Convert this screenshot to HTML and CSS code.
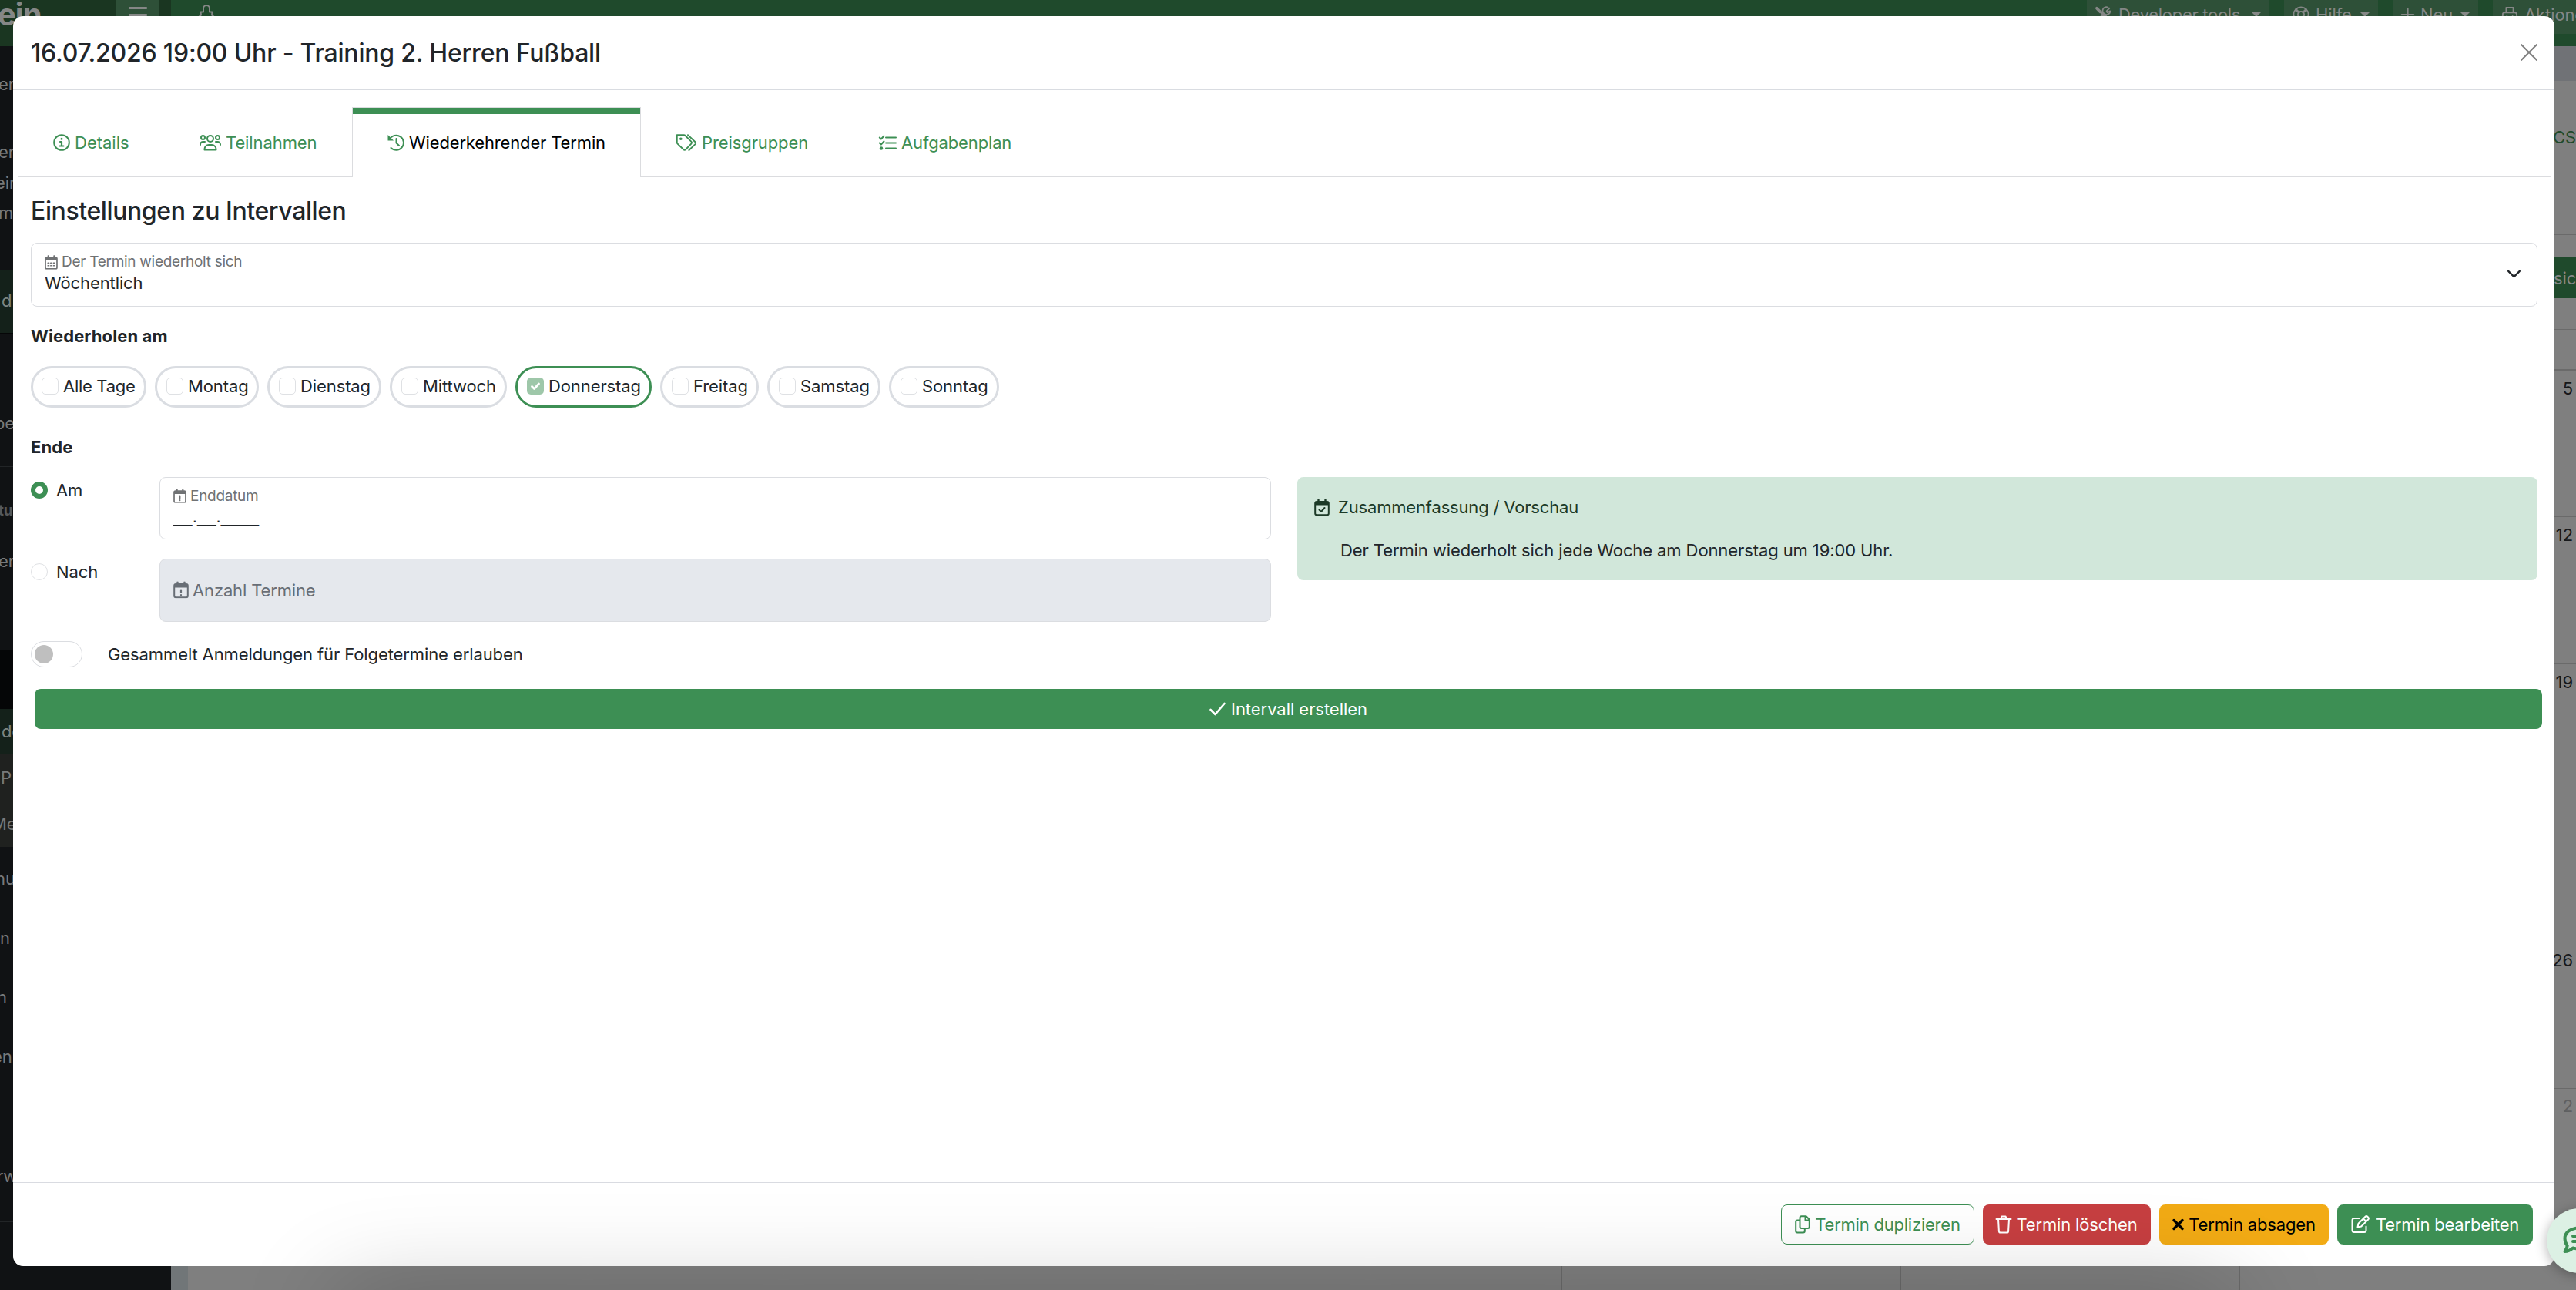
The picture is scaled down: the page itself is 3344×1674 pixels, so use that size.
FILE: index.html
```
<!DOCTYPE html>
<html lang="de">
<head>
    <meta charset="utf-8">
    <title>Termin</title>
    <link rel="stylesheet" href="styles.css">
</head>
<body>
    <svg class="sprite" aria-hidden="true">
        <symbol id="calendar" viewBox="0 0 20 22">
            <path d="M5.5 1v4M14.5 1v4" stroke-width="2.4"/>
            <rect x="1.2" y="3.4" width="17.6" height="17.4" rx="2"/>
            <path d="M1.2 4h17.6v4H1.2z" fill="currentColor" stroke="none"/>
        </symbol>
    </svg>

    <div class="page">
        <div class="topbar">
            <div class="brand">ein</div>
            <div class="burger"><span></span><span></span><span></span></div>
            <div class="topbar-main">
                <svg class="bell" viewBox="0 0 26 34"><path d="M9 9.500V5a4 4 0 0 1 8 0v4.500h3.500l-.5 4 4 3.500-11 12L2 17l4-3.500-.5-4z"/></svg>
                <div class="topbar-menu">
                    <div class="menu-button tools">
                        <svg viewBox="0 0 24 24"><path d="M2 3l5 5M9 9l12 12M3 21l9-9" stroke-width="4"/><path d="M20 3l-4 4 1 2 4-2a5 5 0 0 1-8 4 5 5 0 0 1 5-9"/></svg>
                        <span>Developer tools</span><i class="caret"></i>
                    </div>
                    <div class="menu-button help">
                        <svg viewBox="0 0 24 24"><circle cx="12" cy="12" r="10.500"/><circle cx="12" cy="12" r="4.500"/><path d="M5 5l4 4M19 5l-4 4M5 19l4-4M19 19l-4-4" stroke-width="3"/></svg>
                        <span>Hilfe</span><i class="caret"></i>
                    </div>
                    <div class="menu-button new">
                        <svg viewBox="0 0 20 24"><path d="M10 3v18M1 12h18" stroke-width="2.6"/></svg>
                        <span>Neu</span><i class="caret"></i>
                    </div>
                    <div class="menu-button actions">
                        <svg viewBox="0 0 24 24"><path d="M7 9V2h10v7M2 21V12a3 3 0 0 1 3-3h14a3 3 0 0 1 3 3v9M8 14v3M16 14v3"/></svg>
                        <span>Aktionen</span>
                    </div>
                </div>
            </div>
        </div>

        <div class="page-body">
            <div class="sidebar">
                <span class="nav-item h88">er</span>
                <span class="nav-item h40">er</span>
                <span class="nav-item h40 low">ein</span>
                <span class="nav-item h123">m</span>
                <span class="nav-item active h81">d</span>
                <span class="nav-item line-top h173">be</span>
                <span class="nav-item line-top small">tur</span>
                <span class="nav-item ern">er</span>
                <span class="nav-gap"></span>
                <span class="nav-item active h59">de</span>
                <span class="nav-item sub p">P</span>
                <span class="nav-item sub me">Me</span>
                <span class="nav-item nu">nu</span>
                <span class="nav-item h77">n</span>
                <span class="nav-item h77 left">n</span>
                <span class="nav-item h77 en">en</span>
                <span class="nav-item rw">rw</span>
                <span class="nav-item line-top"></span>
            </div>
            <div class="calendar">
                <div class="crumbs"></div>
                <div class="calendar-head">
                    <span class="ics">CS</span>
                    <span class="view-button">sich</span>
                </div>
                <div class="week-head"></div>
                <div class="week w1"><span>5</span></div>
                <div class="week w2"><span>12</span></div>
                <div class="week w3"><span>19</span></div>
                <div class="week w4"><span>26</span></div>
                <div class="week w5"><span>2</span></div>
            </div>
        </div>
    </div>

    <div class="modal">
        <div class="modal-header">
            <h1>16.07.2026 19:00 Uhr - Training 2. Herren Fußball</h1>
            <svg class="close" viewBox="0 0 24 24"><path d="M2 2l20 20M22 2L2 22"/></svg>
        </div>

        <div class="tabs">
            <div class="tab">
                <svg class="i22" viewBox="0 0 22 22"><circle cx="11" cy="11" r="9.800"/><path d="M9 10h2v5.500M8.500 15.500h5" stroke-width="2.200"/><circle cx="11" cy="6.300" r="1.500" fill="currentColor" stroke="none"/></svg>
                <span>Details</span>
            </div>
            <div class="tab">
                <svg class="i28" viewBox="0 0 28 22"><circle cx="14" cy="6" r="4"/><path d="M6.500 20.500v-1a5.500 5.500 0 0 1 5.500-5.500h4a5.500 5.500 0 0 1 5.500 5.500v1z"/><circle cx="4.500" cy="4.500" r="2.500"/><circle cx="23.500" cy="4.500" r="2.500"/><path d="M1 14v-.5a3.500 3.500 0 0 1 3.500-3.500H7M27 14v-.5a3.500 3.500 0 0 0-3.500-3.500H21"/></svg>
                <span>Teilnahmen</span>
            </div>
            <div class="tab tab-active">
                <svg class="i22" viewBox="0 0 22 22"><path d="M3 6.500a9.600 9.600 0 1 1 1.500 11.500M11.500 6v5.500l3.500 3.500"/><path d="M.5 1v7.500H8z" fill="currentColor" stroke="none"/></svg>
                <span>Wiederkehrender Termin</span>
            </div>
            <div class="tab tab-tags">
                <svg class="i28" viewBox="0 0 28 23"><path d="M1.200 1.200h9.600a2 2 0 0 1 1.400.6l8.600 8.600a1.800 1.800 0 0 1 0 2.500l-7.900 8.300a1.800 1.800 0 0 1-2.600 0L1.800 13a2 2 0 0 1-.6-1.400zM16 1.200l10.300 9.800a1.800 1.800 0 0 1 0 2.500L17.500 22"/><circle cx="6.500" cy="6.500" r="1.900" fill="currentColor" stroke="none"/></svg>
                <span>Preisgruppen</span>
            </div>
            <div class="tab">
                <svg class="i23" viewBox="0 0 23 22"><path d="M9 4.500h13M9 11.500h13M9 18.500h13M.8 4.500l2 2 3.700-4M.8 11.500l2 2 3.700-4"/><circle cx="3" cy="18.500" r="2.200" fill="currentColor" stroke="none"/></svg>
                <span>Aufgabenplan</span>
            </div>
        </div>

        <div class="modal-body">
            <h2>Einstellungen zu Intervallen</h2>
            <div class="field select">
                <div>
                    <div class="field-label">
                        <svg class="cal-small" viewBox="0 0 20 22"><use href="#calendar"/><path d="M5 12h1.500M9.200 12h1.500M13.500 12H15M5 16h1.500M9.200 16h1.500M13.500 16H15" stroke-width="2"/></svg>
                        <span>Der Termin wiederholt sich</span>
                    </div>
                    <div class="field-value">Wöchentlich</div>
                </div>
                <svg class="chevron" viewBox="0 0 20 12"><path d="M2 2l8 8 8-8"/></svg>
            </div>

            <h3>Wiederholen am</h3>
            <div class="days">
                <label class="day all"><i class="box"></i>Alle Tage</label>
                <label class="day mo"><i class="box"></i>Montag</label>
                <label class="day di"><i class="box"></i>Dienstag</label>
                <label class="day mi"><i class="box"></i>Mittwoch</label>
                <label class="day do day-checked"><i class="box"><svg viewBox="0 0 22 22"><path d="M6.500 11.500l3 3 6-6.500"/></svg></i>Donnerstag</label>
                <label class="day fr"><i class="box"></i>Freitag</label>
                <label class="day sa"><i class="box"></i>Samstag</label>
                <label class="day so"><i class="box"></i>Sonntag</label>
            </div>

            <h3 class="end-title">Ende</h3>
            <div class="end-grid">
                <div class="end-options">
                    <label class="radio"><i class="dot dot-checked"></i>Am</label>
                    <div class="field">
                        <div>
                            <div class="field-label">
                                <svg class="cal-small" viewBox="0 0 20 22"><use href="#calendar"/><path d="M10 11v3.500M10 17.500v.3" stroke-width="2.200"/></svg>
                                <span>Enddatum</span>
                            </div>
                            <div class="field-value mask">__.__.____</div>
                        </div>
                    </div>
                    <label class="radio"><i class="dot"></i>Nach</label>
                    <div class="field field-disabled">
                        <svg class="cal" viewBox="0 0 20 22"><use href="#calendar"/><path d="M10 11v3.500M10 17.500v.3" stroke-width="2.200"/></svg>
                        <span>Anzahl Termine</span>
                    </div>
                </div>
                <div class="summary">
                    <div class="summary-title">
                        <svg class="cal" viewBox="0 0 20 22"><use href="#calendar"/><path d="M6.500 14l2.500 2.500 4.500-5"/></svg>
                        <span>Zusammenfassung / Vorschau</span>
                    </div>
                    <div class="summary-text">Der Termin wiederholt sich jede Woche am Donnerstag um 19:00 Uhr.</div>
                </div>
            </div>

            <div class="switch-row">
                <span class="switch"></span>
                <span>Gesammelt Anmeldungen für Folgetermine erlauben</span>
            </div>
            <button class="btn btn-green btn-wide">
                <svg class="i21" viewBox="0 0 21 22"><path d="M1.500 12l6 6L19.500 4" stroke-width="2.600"/></svg>
                <span>Intervall erstellen</span>
            </button>
        </div>

        <div class="modal-footer">
            <button class="btn btn-outline">
                <svg class="i20" viewBox="0 0 20 24"><path d="M8.500 1.200h6l4.300 4.300V15a2 2 0 0 1-2 2H8.500a2 2 0 0 1-2-2V3.200a2 2 0 0 1 2-2zM13.500 1.200v5.300h5.300M6.500 6.500H3.200a2 2 0 0 0-2 2v12a2 2 0 0 0 2 2h7.600a2 2 0 0 0 2-2V17"/></svg>
                <span>Termin duplizieren</span>
            </button>
            <button class="btn btn-red">
                <svg class="i20" viewBox="0 0 20 24"><path d="M.5 5h19M6 5l1.500-3.500h5L14 5M3 5l.9 15.600a2 2 0 0 0 2 1.900h8.200a2 2 0 0 0 2-1.900L17 5"/></svg>
                <span>Termin löschen</span>
            </button>
            <button class="btn btn-yellow">
                <svg class="i15" viewBox="0 0 15 22"><path d="M2 5.500l11 11M13 5.500l-11 11" stroke-width="3.400"/></svg>
                <span>Termin absagen</span>
            </button>
            <button class="btn btn-green">
                <svg class="i24" viewBox="0 0 24 24"><path d="M10.500 4H4a2.500 2.500 0 0 0-2.500 2.500v13A2.500 2.500 0 0 0 4 22h13a2.500 2.500 0 0 0 2.500-2.500V14.500M8.500 15.500l1-4.700 9-9a2 2 0 0 1 2.800 0l.9.900a2 2 0 0 1 0 2.800l-9 9zM16 4.500l3.500 3.500"/></svg>
                <span>Termin bearbeiten</span>
            </button>
        </div>
    </div>

    <div class="overlay">
        <div class="bottom-shade"></div>
        <div class="chat">
            <svg viewBox="0 0 40 36"><path d="M20 2.500c9.900 0 17.500 6 17.500 13.500S29.900 29.500 20 29.500c-2.500 0-4.800-.4-7-1.100C9.500 31.500 6 33 2.500 33c2-2.500 3-5 3.200-7.500C3.700 23 2.500 19.700 2.500 16 2.500 8.500 10.100 2.500 20 2.500zM13 13h14M13 20h9"/></svg>
        </div>
    </div>
</body>
</html>
```
FILE: styles.css
```
* {
    box-sizing: border-box;
}

body {
    position: relative;
    width: 3344px;
    height: 1674px;
    margin: 0;
    overflow: hidden;
    font-family: Inter, "Noto Sans", sans-serif;
    font-size: 22px;
    line-height: 30px;
    letter-spacing: -0.1px;
    color: #212529;
}

h1, h2, h3 {
    margin: 0;
}

svg {
    display: block;
    flex: none;
    overflow: visible;
    fill: none;
    stroke: currentColor;
    stroke-width: 2;
    stroke-linecap: round;
    stroke-linejoin: round;
}

.sprite {
    position: absolute;
    width: 0;
    height: 0;
}

/* page behind the dialog */
.page {
    display: flex;
    flex-direction: column;
    height: 1674px;
    overflow: hidden;
    background-color: #7f7f7f;
}

.topbar {
    display: flex;
    flex: none;
    height: 60px;
    background-color: #1a3621;
    color: #858786;
}

.brand {
    width: 151px;
    text-indent: -3px;
    font-size: 40px;
    line-height: 38px;
    font-weight: 700;
    letter-spacing: -1px;
}

.burger {
    display: flex;
    flex-direction: column;
    gap: 6px;
    width: 56px;
    height: 60px;
    padding: 9px 16px 0;
    background-color: #2e5038;
}

.burger span {
    height: 3px;
    border-radius: 1px;
    background-color: #858786;
}

.topbar-main {
    display: flex;
    justify-content: space-between;
    flex: 1;
    margin-left: 15px;
    padding-left: 33px;
    background-color: #1f4a2c;
}

.bell {
    width: 26px;
    height: 34px;
    margin-top: 6px;
}

.topbar-menu {
    display: flex;
    gap: 19px;
}

.menu-button {
    display: flex;
    align-items: center;
    height: 44px;
    padding: 0 11px 6px;
    background-color: #2e5038;
    white-space: nowrap;
}

.menu-button svg {
    width: 22px;
    height: 22px;
    margin-right: 8px;
}

.menu-button.new svg {
    width: 17px;
}

.tools { width: 237px; letter-spacing: -0.3px; }
.help { width: 122px; }
.new { width: 111px; }
.actions { width: 108px; overflow: hidden; }

.caret {
    margin-left: auto;
    border: 6px solid transparent;
    border-top-color: #858786;
    border-bottom: 0;
}

.page-body {
    display: flex;
    flex: 1;
}

.sidebar {
    width: 222px;
    background-color: #101214;
    color: #77797a;
    overflow: hidden;
}

.nav-item {
    display: block;
    height: 77px;
    text-indent: -2px;
}

.active { background-color: #14211a; color: #7d8580; text-indent: 2px; }
.line-top { border-top: 1px solid #222527; }
.sub { background-color: #1f211f; }

.h88 { height: 88px; padding-top: 34px; }
.h40 { height: 40px; padding-top: 34px; }
.low { text-indent: -6px; }
.h123 { height: 123px; padding-top: 33px; }
.h81 { height: 81px; padding-top: 24px; }
.h173 { height: 173px; padding-top: 100px; border-top: 2px solid #050607; text-indent: -7px; }
.small { height: 67px; padding-top: 42px; font-size: 19px; font-weight: 700; color: #55585a; }
.ern { height: 171px; padding-top: 41px; }
.nav-gap { display: block; height: 77px; background-color: #050607; }
.h59 { height: 59px; padding-top: 14px; }
.p { height: 60px; padding-top: 15px; text-indent: 1px; }
.me { height: 60px; padding-top: 15px; text-indent: -11px; }
.nu { height: 94px; padding-top: 26px; text-indent: -6px; }
.h77 { padding-top: 9px; text-indent: 0; }
.left { text-indent: -4px; }
.en { text-indent: -10px; }
.rw { height: 161px; padding-top: 87px; text-indent: -4px; }

.calendar {
    flex: 1;
    border-left: 22px solid #717678;
    background-image: linear-gradient(90deg, #6a6a6a 1px, transparent 1px);
    background-size: 440px 100%;
    background-position: 23px 0;
    text-align: right;
}

.crumbs {
    height: 45px;
    background-color: #707276;
}

.calendar-head {
    display: flex;
    flex-direction: column;
    align-items: flex-end;
    height: 322px;
    background-color: #7f7f7f;
}

.ics {
    width: 30px;
    height: 200px;
    padding-top: 58px;
    border-bottom: 1px solid #6a6a6a;
    color: #1f4a2c;
    text-align: left;
}

.view-button {
    width: 80px;
    height: 53px;
    margin-top: 29px;
    padding: 12px 0 0 51px;
    overflow: hidden;
    background-color: #1f4a2c;
    color: #858786;
    text-align: left;
}

.week-head {
    height: 54px;
    border-top: 1px solid #6a6a6a;
    border-bottom: 2px solid #6a6a6a;
    background-color: #7f7f7f;
}

.week {
    padding: 8px 4px 0 0;
    border-bottom: 1px solid #6a6a6a;
    color: #17181a;
}

.w1 { height: 190px; }
.w2 { height: 191px; }
.w3 { height: 361px; }
.w4 { height: 190px; }
.w5 { height: 260px; padding-top: 7px; border-bottom: 0; color: #5f6061; }

/* dialog */
.modal {
    position: absolute;
    left: 17px;
    top: 21px;
    display: flex;
    flex-direction: column;
    width: 3299px;
    height: 1622px;
    border-radius: 13px;
    background-color: #fff;
}

.modal-header {
    display: flex;
    align-items: center;
    justify-content: space-between;
    flex: none;
    height: 96px;
    padding: 0 21px 0 23px;
    border-bottom: 1px solid #d9dce1;
}

.modal-header h1,
.modal-body h2 {
    font-size: 32px;
    line-height: 40px;
    font-weight: 500;
    letter-spacing: -0.2px;
}

.close {
    width: 24px;
    height: 24px;
    margin-bottom: 2px;
    color: #808080;
}

.tabs {
    display: flex;
    flex: none;
    height: 91px;
    margin: 22px 5px 0 6px;
    border-bottom: 1px solid #dbdcdf;
}

.tab {
    display: flex;
    align-items: center;
    height: 91px;
    padding: 0 45px;
    border: 1px solid transparent;
    border-bottom: 0;
    color: #3d8f54;
    white-space: nowrap;
}

.tab svg {
    margin-right: 6px;
}

.tab:nth-child(1) { width: 190px; letter-spacing: 0; }
.tab:nth-child(2) { width: 244px; }
.tab:nth-child(3) { width: 375px; letter-spacing: -0.15px; }
.tab:nth-child(4) { width: 263px; }
.tab:nth-child(5) { letter-spacing: -0.15px; }

.tab-tags {
    padding-left: 44px;
}

.tab-active {
    border-color: #dbdcdf;
    box-shadow: inset 0 8px #3d8f54;
    background-color: #fff;
    color: #3d8f54;
}

.tab-active span {
    color: #000;
}

.i15 { width: 15px; height: 22px; }
.i20 { width: 20px; height: 24px; }
.i21 { width: 21px; height: 22px; }
.i22 { width: 22px; height: 22px; }
.i23 { width: 23px; height: 22px; }
.i24 { width: 24px; height: 24px; }
.i28 { width: 28px; height: 22px; }

.modal-body {
    flex: 1;
    padding: 24px 22px 0 23px;
}

.modal-body h2 {
    letter-spacing: -0.4px;
}

.modal-body h3 {
    margin-top: 23px;
    font-size: 22px;
    line-height: 30px;
    font-weight: 700;
    letter-spacing: 0.1px;
}

.field {
    display: flex;
    align-items: center;
    height: 81px;
    padding: 0 17px 2px;
    border: 1px solid #dbdde1;
    border-radius: 8px;
}

.select {
    justify-content: space-between;
    height: 83px;
    margin-top: 21px;
    padding: 0 20px 3px 17px;
}

.field-label {
    display: flex;
    align-items: center;
    gap: 5px;
    font-size: 19px;
    line-height: 24px;
    letter-spacing: -0.28px;
    color: #707274;
}

.field-value {
    line-height: 30px;
}

.mask {
    font-family: "Liberation Sans", Arial, sans-serif;
    letter-spacing: 0.1px;
}

.cal-small {
    width: 17px;
    height: 19px;
}

.cal {
    width: 20px;
    height: 23px;
}

.chevron {
    width: 19px;
    height: 11px;
    stroke-width: 2.6;
}

.days {
    display: flex;
    gap: 11px;
    margin-top: 24px;
}

.day {
    display: flex;
    align-items: center;
    gap: 6px;
    height: 54px;
    padding: 0 0 2px 12px;
    border: 3px solid #dadde2;
    border-radius: 27px;
    white-space: nowrap;
}

.all { width: 150px; padding-left: 11px; letter-spacing: -0.3px; }
.mo { width: 135px; }
.di { width: 148px; }
.mi { width: 152px; }
.do { width: 177px; }
.fr { width: 128px; }
.sa { width: 147px; }
.so { width: 143px; }

.box {
    width: 22px;
    height: 22px;
    border: 1px solid #dfe1e4;
    border-radius: 5px;
}

.day-checked {
    border-color: #3d8f54;
}

.day-checked .box {
    border: 0;
    background-color: #9ec7a9;
    color: #fff;
}

.day-checked svg {
    width: 22px;
    height: 22px;
    stroke-width: 2.8;
}

.modal-body .end-title {
    margin-top: 36px;
}

.end-grid {
    display: grid;
    grid-template-columns: 1fr 1fr;
    align-items: start;
    gap: 34px;
    margin-top: 24px;
}

.end-options {
    display: grid;
    grid-template-columns: 167px 1fr;
    row-gap: 25px;
}

.radio {
    display: flex;
    align-items: center;
    gap: 11px;
    height: 33px;
}

.dot {
    width: 22px;
    height: 22px;
    border: 1px solid #dfe1e4;
    border-radius: 50%;
}

.dot-checked {
    border: 6px solid #3d8f54;
}

.field-disabled {
    height: 82px;
    gap: 5px;
    padding-bottom: 1px;
    background-color: #e5e8ed;
    letter-spacing: -0.15px;
    color: #686e76;
}

.summary {
    height: 134px;
    padding: 24px 22px;
    border-radius: 8px;
    background-color: #d1e7da;
}

.summary-title {
    display: flex;
    gap: 11px;
    align-items: center;
    letter-spacing: -0.17px;
    color: #1c3a27;
}

.summary-text {
    margin-top: 26px;
    padding-left: 34px;
}

.switch-row {
    display: flex;
    align-items: center;
    gap: 33px;
    height: 34px;
    margin-top: 25px;
}

.switch {
    width: 67px;
    height: 34px;
    padding: 4px;
    border: 1px solid #dbdde1;
    border-radius: 17px;
}

.switch::before {
    content: "";
    display: block;
    width: 24px;
    height: 24px;
    border-radius: 50%;
    background-color: #bfbfbf;
}

.btn {
    display: flex;
    align-items: center;
    justify-content: center;
    gap: 6px;
    height: 52px;
    padding: 0 17px;
    border: 1px solid transparent;
    border-radius: 8px;
    font: inherit;
    letter-spacing: -0.15px;
    color: #fff;
    white-space: nowrap;
}

.btn-wide {
    width: 3255px;
    margin: 28px 0 0 5px;
    gap: 7px;
    letter-spacing: -0.05px;
}

.btn-green { background-color: #3d8f54; }
.btn-red { background-color: #c73f41; }
.btn-yellow { background-color: #f2ab15; color: #000; }
.btn-outline { background-color: #fff; border-color: #3d8f54; color: #3d8f54; }

.modal-footer {
    display: flex;
    align-items: center;
    justify-content: flex-end;
    gap: 11px;
    flex: none;
    height: 109px;
    padding-right: 28px;
    border-top: 1px solid #d9dbe1;
}

.modal-footer .btn:nth-child(1) { width: 251px; letter-spacing: -0.22px; }
.modal-footer .btn:nth-child(2) { width: 218px; }
.modal-footer .btn:nth-child(3) { width: 220px; }
.modal-footer .btn:nth-child(4) { width: 254px; gap: 8px; letter-spacing: -0.2px; }

/* floating elements above the dialog */
.overlay {
    position: absolute;
    inset: 0;
    overflow: hidden;
    pointer-events: none;
}

.bottom-shade {
    position: absolute;
    left: 440px;
    top: 1680px;
    width: 2460px;
    height: 100px;
    box-shadow: 0 0 130px rgba(0, 0, 0, 0.23);
}

.chat {
    position: absolute;
    left: 3306px;
    top: 1568px;
    width: 84px;
    height: 84px;
    padding: 23px 21px;
    border-radius: 50%;
    background-color: #dcf0e4;
    box-shadow: 0 3px 16px rgba(0, 0, 0, 0.3);
    color: #3d8f54;
}

.chat svg {
    width: 40px;
    height: 36px;
    stroke-width: 4;
}
```
